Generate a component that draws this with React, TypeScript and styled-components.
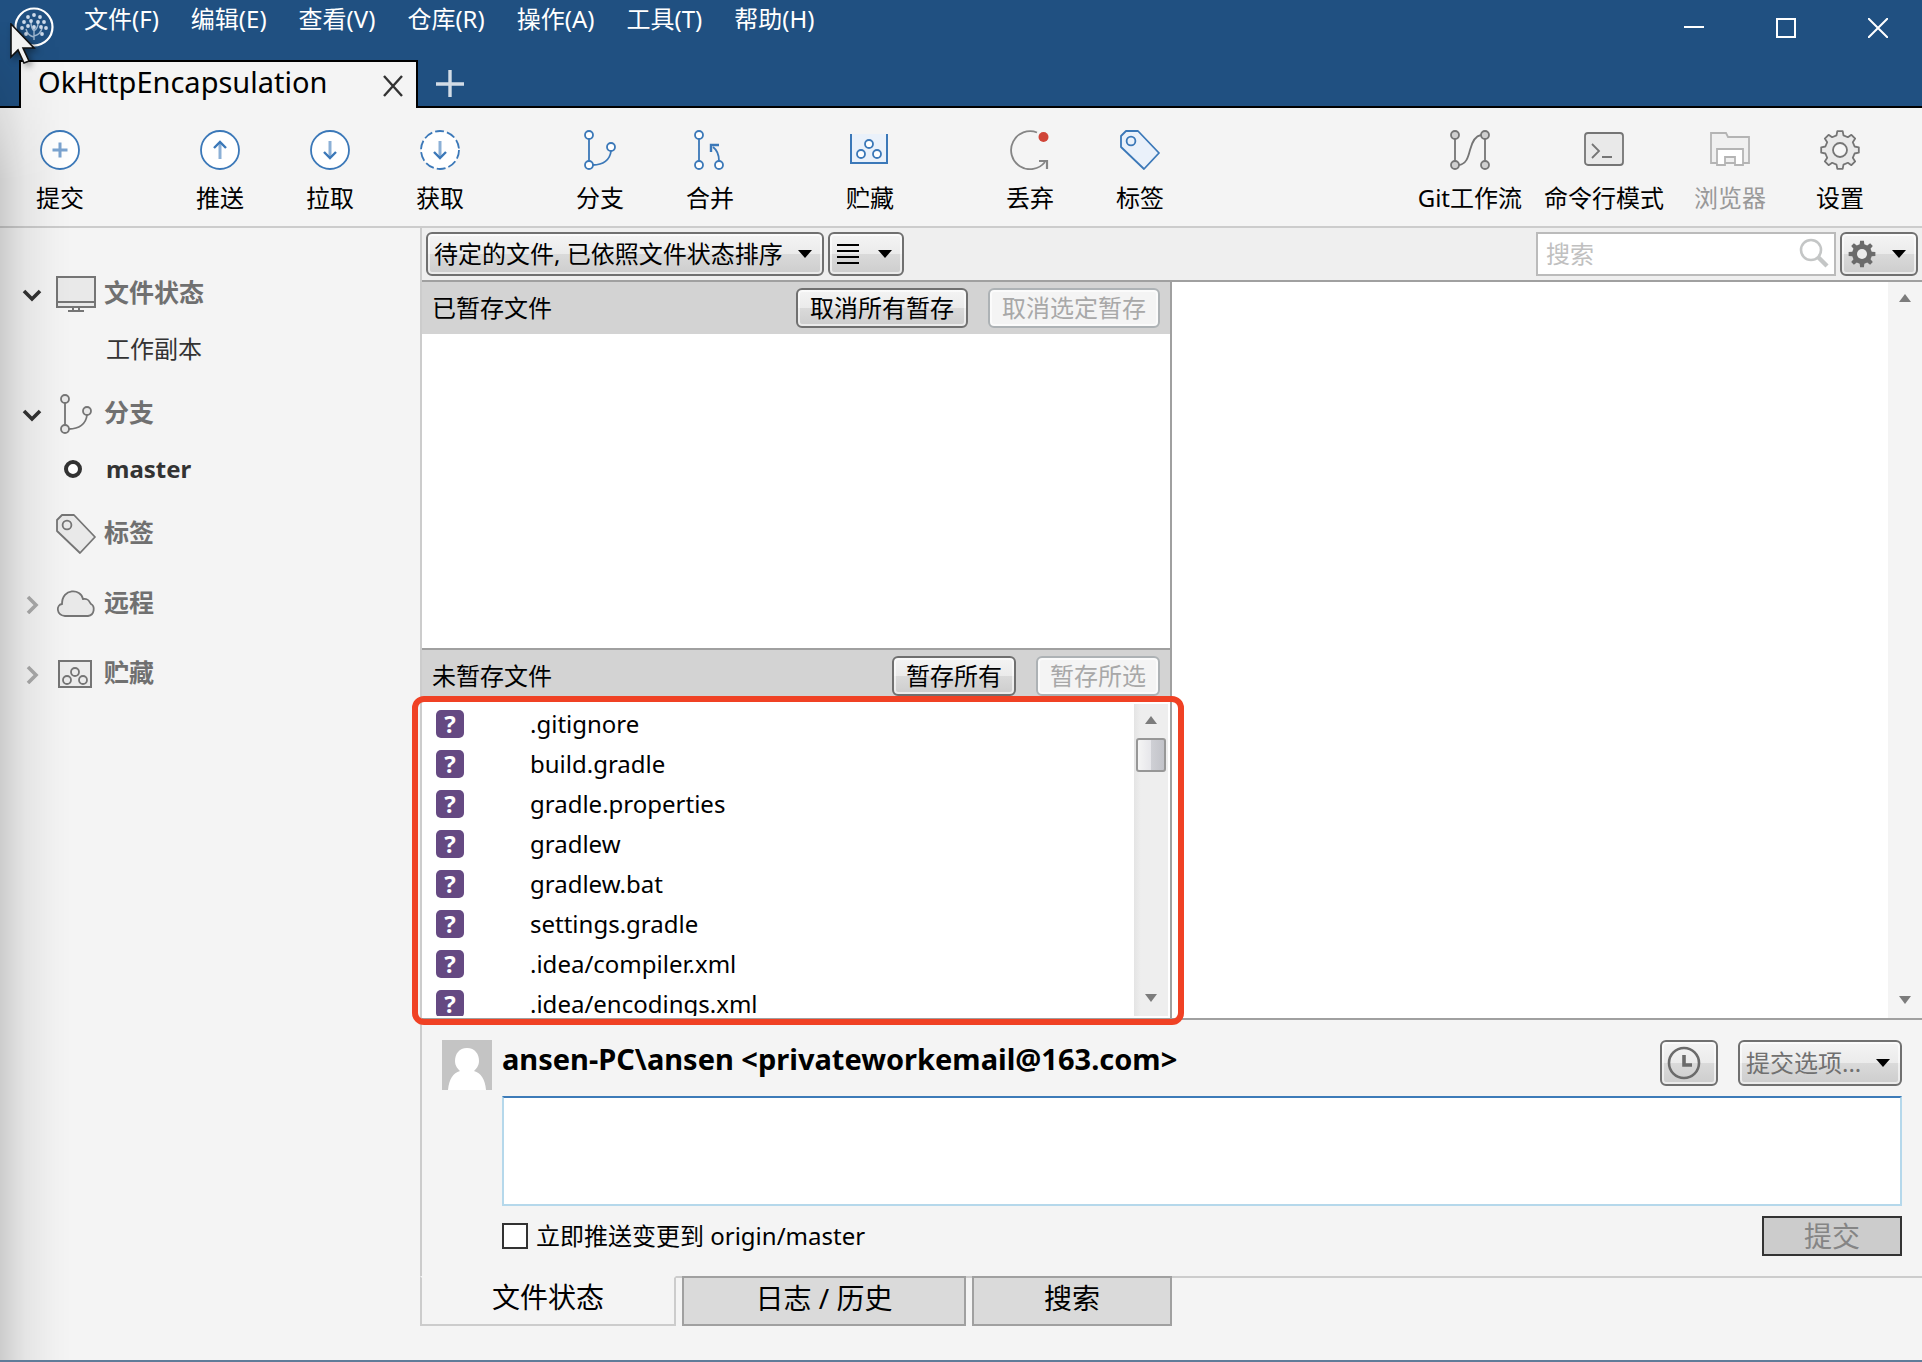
import React from "react";
import styled, { createGlobalStyle, css } from "styled-components";

const GlobalStyle = createGlobalStyle`
  *, *::before, *::after { box-sizing: border-box; }
  body {
    margin: 0;
    background: #f4f4f4;
    color: #000;
    font-family: "Noto Sans", "Noto Sans CJK SC", sans-serif;
    font-size: 24px;
    line-height: 32px;
  }
  button, input, select, textarea {
    font: inherit;
    color: inherit;
    margin: 0;
  }
  ul { list-style: none; margin: 0; padding: 0; }
  svg { display: block; flex: none; }
`;

/* ---------- shared drawing helpers ---------- */

const BLUE = "#3b78b8";
const GREY = "#757575";

function gearPath(c: number, outer: number, inner: number, teeth: number) {
  const pts: string[] = [];
  const step = (Math.PI * 2) / teeth;
  const at = (r: number, a: number) =>
    `${(c + r * Math.sin(a)).toFixed(2)} ${(c - r * Math.cos(a)).toFixed(2)}`;
  for (let i = 0; i < teeth; i++) {
    const a = i * step;
    pts.push(at(inner, a - step * 0.3), at(outer, a - step * 0.18));
    pts.push(at(outer, a + step * 0.18), at(inner, a + step * 0.3));
  }
  return `M${pts.join("L")}Z`;
}

const Icon = ({ children, size = 40, color = BLUE }: { children: React.ReactNode; size?: number; color?: string }) => (
  <svg width={size} height={size} viewBox="0 0 40 40" fill="none" stroke={color} strokeWidth={1.8} aria-hidden="true">
    {children}
  </svg>
);

const CommitIcon = () => (
  <Icon>
    <circle cx="20" cy="20" r="19" fill="#fff" />
    <path d="M20 12.5v15M12.5 20h15" stroke="#7ba4d0" strokeWidth="3" />
  </Icon>
);
const PushIcon = () => (
  <Icon>
    <circle cx="20" cy="20" r="19" fill="#fff" />
    <path d="M20 29V13" stroke="#8cb0d6" strokeWidth="3" />
    <path d="M14 18l6-6 6 6" strokeWidth="2.4" />
  </Icon>
);
const PullIcon = ({ dashed }: { dashed?: boolean }) => (
  <Icon>
    <circle cx="20" cy="20" r="19" fill="#fff" strokeDasharray={dashed ? "9 3" : undefined} />
    <path d="M20 11v16" stroke="#8cb0d6" strokeWidth="3" />
    <path d="M14 22l6 6 6-6" strokeWidth="2.4" />
  </Icon>
);
const BranchIcon = ({ color = BLUE, fill = "#fff" }: { color?: string; fill?: string }) => (
  <Icon color={color}>
    <path d="M9 9v22M13 35c10 0 17-5 18-14" />
    <g fill={fill}>
      <circle cx="9" cy="5" r="4" />
      <circle cx="9" cy="35" r="4" />
      <circle cx="31" cy="17" r="4" />
    </g>
  </Icon>
);
const MergeIcon = () => (
  <Icon>
    <path d="M9 9v22M29 31c0-6-2-11-6-14" />
    <path d="M21 22v-7h8" strokeWidth="2.4" />
    <g fill="#fff">
      <circle cx="9" cy="5" r="4" />
      <circle cx="9" cy="35" r="4" />
      <circle cx="29" cy="35" r="4" />
    </g>
  </Icon>
);
const StashIcon = () => (
  <Icon>
    <path d="M1 4v29h36V4z" fill="#eaf1fa" stroke="none" />
    <path d="M1 4v29h36V4" strokeWidth="2" />
    <g fill="#fff">
      <circle cx="19" cy="14" r="4" />
      <circle cx="11" cy="24" r="4" />
      <circle cx="27" cy="24" r="4" />
    </g>
  </Icon>
);
const DiscardIcon = () => (
  <Icon color="#858585">
    <path d="M27 2.5A19 19 0 1 0 35 32" />
    <path d="M29 31h8v8" strokeWidth="2.2" />
    <circle cx="33.500" cy="7" r="5" fill="#d04437" stroke="none" />
  </Icon>
);
const TagIcon = ({ color = BLUE, fill = "#eaf1fa" }: { color?: string; fill?: string }) => (
  <Icon color={color}>
    <path d="M6 1h12l21 22-15 16L1 17V6z" fill={fill} strokeLinejoin="round" />
    <circle cx="11" cy="11" r="4.400" />
  </Icon>
);
const FlowIcon = () => (
  <Icon color={GREY}>
    <path d="M5 9v22M35 9v22M9 35c7-1 9-7 11-15s5-14 11-15" />
    <g fill="#d0d0d0">
      <circle cx="5" cy="5" r="4" />
      <circle cx="5" cy="35" r="4" />
      <circle cx="35" cy="5" r="4" />
      <circle cx="35" cy="35" r="4" />
    </g>
  </Icon>
);
const TerminalIcon = () => (
  <Icon color={GREY}>
    <rect x="1" y="3" width="38" height="32" rx="3" fill="#e9e9e9" />
    <path d="M8 14l7 7-7 7M18 27h10" />
  </Icon>
);
const ExplorerIcon = () => (
  <Icon color="#b4b4b4">
    <path d="M1 33V3h15l2 4h21v26z" fill="#f0f0f0" />
    <path d="M7 35V19h26v16h-8v-8h-10v8z" fill="#fff" />
  </Icon>
);
const SettingsIcon = () => (
  <Icon color={GREY}>
    <path d={gearPath(20, 19, 15, 8)} fill="#e9e9e9" strokeLinejoin="round" />
    <circle cx="20" cy="20" r="7" fill="#f6f6f6" />
  </Icon>
);
const SolidGear = () => (
  <svg width="28" height="28" viewBox="0 0 28 28" aria-hidden="true">
    <path d={gearPath(14, 13.5, 10, 8)} fill="#6b6b6b" />
    <circle cx="14" cy="14" r="5" fill="#ececec" />
  </svg>
);
const MonitorIcon = () => (
  <Icon color={GREY}>
    <rect x="1" y="3" width="38" height="30" fill="#e9e9e9" strokeWidth="2" />
    <path d="M1 28h38M17 33v4M23 33v4M12 37h16" strokeWidth="2" />
  </Icon>
);
const CloudIcon = () => (
  <Icon color={GREY}>
    <path
      d="M9 32c-9-1-9-11-3-12C6 4 25 4 27 15c6-1 6 3 8 5 4 2 4 11-3 12z"
      fill="#e9e9e9"
    />
  </Icon>
);
const StashBoxIcon = () => (
  <Icon color={GREY}>
    <rect x="3" y="7" width="32" height="26" fill="#ececec" strokeWidth="2" />
    <circle cx="19" cy="18" r="4" />
    <circle cx="11" cy="26" r="4" />
    <circle cx="27" cy="26" r="4" />
  </Icon>
);

const ArrowMark = ({ up, small }: { up?: boolean; small?: boolean }) => (
  <svg width={small ? 12 : 14} height="8" viewBox="0 0 14 8" preserveAspectRatio="none" aria-hidden="true">
    <path d={up ? "M0 8h14L7 0z" : "M0 0h14L7 8z"} fill={small ? "#7c7c7c" : "#000"} />
  </svg>
);

/* ---------- window frame ---------- */

const Window = styled.div`
  position: relative;
  display: flex;
  flex-direction: column;
  height: 100vh;
  min-height: 900px;
  border-bottom: 2px solid #5f7c99;
`;

const EdgeShade = styled.div`
  position: absolute;
  inset: 0 auto 0 0;
  width: 72px;
  background: linear-gradient(to right, rgba(0, 0, 0, 0.16), rgba(0, 0, 0, 0.06) 36%, rgba(0, 0, 0, 0.01) 78%, transparent);
  mask-image: linear-gradient(to bottom, transparent 20px, #000 180px);
  pointer-events: none;
`;

const Pointer = styled.svg`
  position: absolute;
  left: 10px;
  top: 23px;
  filter: drop-shadow(3px 3px 3px rgba(0, 0, 0, 0.4));
  pointer-events: none;
`;

const TitleBar = styled.header`
  background: #205081;
`;

const TitleRow = styled.div`
  display: flex;
  align-items: flex-start;
  height: 60px;
  padding-left: 14px;
`;

const LogoBox = styled.div`
  padding-top: 7px;
  width: 70px;
`;

const MenuBar = styled.nav`
  display: flex;
  gap: 32px;
  flex: 1;
`;

const plainButton = css`
  border: 0;
  padding: 0;
  background: none;
  white-space: nowrap;
`;

const MenuButton = styled.button`
  ${plainButton}
  height: 38px;
  color: #fff;
`;

const CaptionButton = styled.button`
  ${plainButton}
  display: grid;
  place-items: center;
  width: 88px;
  height: 56px;
  margin-left: 4px;
`;

const TabRow = styled.div`
  display: flex;
  height: 48px;
`;

const TabLine = styled.div<{ $lead?: boolean }>`
  display: flex;
  align-items: center;
  width: ${(p) => (p.$lead ? "19px" : "auto")};
  flex: ${(p) => (p.$lead ? "none" : "1")};
  padding-left: ${(p) => (p.$lead ? "0" : "16px")};
  border-bottom: 2px solid #000;
`;

const RepoTab = styled.div`
  display: flex;
  align-items: flex-start;
  justify-content: space-between;
  width: 399px;
  padding: 4px 13px 0 17px;
  border: 2px solid #000;
  border-bottom: 0;
  background: #f4f4f4;
  font-size: 29px;
`;

const IconButton = styled.button`
  ${plainButton}
`;

const CloseTab = styled(IconButton)`
  padding-top: 8px;
`;

/* ---------- toolbar ---------- */

const Toolbar = styled.div`
  display: flex;
  justify-content: space-between;
  height: 120px;
  padding: 22px 27px 0 5px;
  border-bottom: 2px solid #ccc;
`;

const ToolGroups = styled.div`
  display: flex;
  gap: 50px;
`;

const ToolGroup = styled.div`
  display: flex;
`;

const ToolButton = styled.button`
  ${plainButton}
  display: flex;
  flex-direction: column;
  align-items: center;
  gap: 12px;
  min-width: 110px;
  height: 84px;
  padding: 0 11px;
  &:disabled { color: #999; }
`;

/* ---------- body ---------- */

const Body = styled.div`
  display: flex;
  flex: 1;
  min-height: 0;
`;

const Sidebar = styled.aside`
  width: 420px;
  flex: none;
  padding-top: 29px;
`;

const SectionRow = styled.div`
  display: flex;
  align-items: center;
  height: 70px;
  padding: 4px 0 0 22px;
`;

const SectionName = styled.h2`
  margin: 0 0 4px 8px;
  font-size: 25px;
  font-weight: 700;
  color: #707070;
`;

const ChevronBox = styled.span`
  width: 34px;
`;

const SectionChild = styled.div<{ $current?: boolean }>`
  display: flex;
  align-items: center;
  height: 50px;
  padding: 0 0 6px 64px;
  color: #333;
  font-weight: ${(p) => (p.$current ? 700 : 400)};
`;

const ChildMark = styled.span`
  width: 42px;
`;

const Main = styled.main`
  display: flex;
  flex-direction: column;
  flex: 1;
  min-width: 0;
`;

const Work = styled.div`
  display: flex;
  flex-direction: column;
  flex: 1;
  min-height: 0;
  border-left: 2px solid #ccc;
`;

const FilterBar = styled.div`
  display: flex;
  gap: 4px;
  height: 54px;
  padding: 4px;
  background: #efefef;
  border-bottom: 2px solid #a0a0a0;
`;

const Spacer = styled.div`
  flex: 1;
`;

const raised = css`
  border: 2px solid #707070;
  border-radius: 6px;
  background: linear-gradient(#f4f4f4, #ebebeb 50%, #dadada 50%, #cdcdcd);
  box-shadow: inset 0 0 0 2px rgba(255, 255, 255, 0.6);
`;

const SelectWrap = styled.label<{ $width: number }>`
  display: grid;
  grid-template: 100% / 100%;
  align-items: center;
  width: ${(p) => p.$width}px;
  & > * { grid-area: 1 / 1; }
  & > svg { justify-self: end; margin-right: 12px; pointer-events: none; }
`;

const Select = styled.select<{ $muted?: boolean }>`
  ${raised}
  appearance: none;
  width: 100%;
  height: 100%;
  padding: 0 0 0 6px;
  color: ${(p) => (p.$muted ? "#707070" : "#000")};
`;

const MenuDrop = styled.button<{ $width: number }>`
  ${raised}
  display: flex;
  align-items: center;
  justify-content: space-between;
  width: ${(p) => p.$width}px;
  padding: 0 10px 0 6px;
`;

const SearchBox = styled.label`
  display: flex;
  align-items: center;
  width: 300px;
  padding-right: 4px;
  border: 2px solid #bbb;
  background: #fff;
`;

const SearchInput = styled.input`
  flex: 1;
  min-width: 0;
  padding: 0 0 0 8px;
  border: 0;
  outline: 0;
  background: none;
  &::placeholder { color: #c0c0c0; }
`;

const Panes = styled.div`
  display: grid;
  grid-template: 100% / 1fr 1fr;
  flex: 1;
  min-height: 0;
  border-bottom: 2px solid #a0a0a0;
`;

const FilePane = styled.div`
  display: flex;
  flex-direction: column;
  min-width: 0;
  padding-bottom: 2px;
  border-right: 2px solid #a0a0a0;
  background: #fff;
`;

const StageSection = styled.section<{ $divided?: boolean }>`
  display: flex;
  flex-direction: column;
  flex: 1;
  min-height: 0;
  border-top: ${(p) => (p.$divided ? "2px solid #a0a0a0" : "0")};
`;

const StageHeader = styled.div`
  display: flex;
  gap: 20px;
  height: 52px;
  padding: 6px 10px;
  background: #d3d3d3;
`;

const StageTitle = styled.h3`
  flex: 1;
  margin: 0;
  font-size: 24px;
  font-weight: 400;
  line-height: 40px;
`;

const StageButton = styled.button`
  ${raised}
  height: 40px;
  padding: 0 12px;
  white-space: nowrap;
  &:disabled {
    border-color: #adb2b5;
    background: #f4f4f4;
    color: #a8a8a8;
  }
`;

const ListArea = styled.div`
  position: relative;
  display: flex;
  flex: 1;
  min-height: 0;
  padding: 2px 2px 0 0;
`;

const Highlight = styled.div`
  position: absolute;
  z-index: 1;
  inset: -6px -14px -9px -10px;
  border: 6px solid #f04124;
  border-radius: 12px;
  pointer-events: none;
`;

const FileList = styled.ul`
  flex: 1;
  overflow: hidden;
`;

const FileRow = styled.li`
  display: flex;
  align-items: center;
  height: 40px;
  padding-left: 14px;
`;

const Badge = styled.span`
  width: 28px;
  height: 28px;
  margin-right: 66px;
  border-radius: 5px;
  background: #654982;
  color: #fff;
  font-weight: 700;
  line-height: 28px;
  text-align: center;
`;

const ScrollTrack = styled.div<{ $tinted?: boolean }>`
  display: flex;
  flex-direction: column;
  align-items: center;
  width: 34px;
  padding: 12px 0 14px;
  background: ${(p) => (p.$tinted ? "linear-gradient(to right, #e4e4e4, #eee 20%)" : "#f4f4f4")};
`;

const Thumb = styled.div`
  width: 30px;
  height: 34px;
  margin-top: 14px;
  border: 2px solid #979797;
  border-radius: 3px;
  background: linear-gradient(to right, #f5f5f5, #e6e6ea 50%, #cfd0d5 50%, #c2c3c9);
`;

const DiffPane = styled.div`
  display: flex;
  justify-content: flex-end;
  background: #fff;
`;

/* ---------- commit form ---------- */

const CommitForm = styled.form`
  display: flex;
  gap: 10px;
  padding: 20px;
`;

const CommitFields = styled.div`
  display: flex;
  flex-direction: column;
  flex: 1;
  gap: 10px;
`;

const AuthorRow = styled.div`
  display: flex;
  gap: 20px;
  height: 46px;
`;

const Author = styled.strong`
  flex: 1;
  font-size: 29px;
  line-height: 38px;
  white-space: nowrap;
`;

const ClockButton = styled.button`
  ${raised}
  width: 58px;
  padding: 0 0 0 5px;
`;

const Message = styled.textarea`
  height: 110px;
  border: 2px solid #b5d8eb;
  border-top-color: #3d7bb8;
  background: #fff;
  outline: 0;
  resize: none;
`;

const SubmitRow = styled.div`
  display: flex;
  align-items: center;
  justify-content: space-between;
`;

const PushLabel = styled.label`
  display: flex;
  align-items: center;
  gap: 8px;
`;

const Tick = styled.input`
  appearance: none;
  width: 26px;
  height: 26px;
  border: 2px solid #333;
  background: #fff;
`;

const SubmitButton = styled.button`
  width: 140px;
  height: 40px;
  padding: 0;
  border: 2px solid #333;
  background: #ccc;
  font-size: 28px;
  line-height: 32px;
  &:disabled { color: #858585; }
`;

/* ---------- view tabs ---------- */

const ViewTabs = styled.div`
  display: flex;
  height: 84px;
  padding-bottom: 34px;
`;

const ViewTab = styled.button<{ $width: number; $active?: boolean }>`
  width: ${(p) => p.$width}px;
  padding: 0 0 ${(p) => (p.$active ? 8 : 6)}px;
  border: 2px solid ${(p) => (p.$active ? "#ccc" : "#a0a0a0")};
  background: ${(p) => (p.$active ? "#f4f4f4" : "#dadada")};
  font-size: 28px;
  white-space: nowrap;
  ${(p) => p.$active && "border-top-color: #f4f4f4;"}
`;

const TabGap = styled.div<{ $fill?: boolean }>`
  width: 6px;
  flex: ${(p) => (p.$fill ? "1" : "none")};
  border-top: 2px solid #ccc;
`;

/* ---------- page ---------- */

const MENUS = ["文件(F)", "编辑(E)", "查看(V)", "仓库(R)", "操作(A)", "工具(T)", "帮助(H)"];

const TOOLS: [string, React.ReactNode][][] = [
  [["提交", <CommitIcon />]],
  [["推送", <PushIcon />], ["拉取", <PullIcon />], ["获取", <PullIcon dashed />]],
  [["分支", <BranchIcon />], ["合并", <MergeIcon />]],
  [["贮藏", <StashIcon />]],
  [["丢弃", <DiscardIcon />], ["标签", <TagIcon />]],
];

const SIDE_TOOLS: [string, React.ReactNode, boolean][] = [
  ["Git工作流", <FlowIcon />, false],
  ["命令行模式", <TerminalIcon />, false],
  ["浏览器", <ExplorerIcon />, true],
  ["设置", <SettingsIcon />, false],
];

const FILES = [
  ".gitignore",
  "build.gradle",
  "gradle.properties",
  "gradlew",
  "gradlew.bat",
  "settings.gradle",
  ".idea/compiler.xml",
  ".idea/encodings.xml",
];

const LOGO_DOTS = [
  [20, 8], [14, 10], [26, 10], [10, 15], [30, 15], [17, 14], [24, 15], [8, 21],
  [32, 21], [14, 19], [27, 20], [12, 27], [28, 27], [20, 20],
];

const Logo = () => (
  <svg width="40" height="40" viewBox="0 0 40 40" fill="none" stroke="#fff" aria-hidden="true">
    <circle cx="20" cy="20" r="18.500" strokeWidth="2.200" />
    <path
      d="M20 33V20M20 29c4-1 7-3 8-8M20 30c-5-1-7-4-8-8M20 24c3-2 4-4 4-8M20 24c-2-2-3-5-3-9"
      stroke="#9db5ce"
      strokeWidth="1.400"
    />
    <g fill="#cddaea" stroke="none">
      {LOGO_DOTS.map(([x, y]) => <circle key={`${x}-${y}`} cx={x} cy={y} r="1.900" />)}
    </g>
  </svg>
);

const Chevron = ({ open, hidden }: { open?: boolean; hidden?: boolean }) => (
  <ChevronBox>
    {!hidden && (
      <svg width="20" height="20" viewBox="0 0 20 20" fill="none" strokeWidth="3.600" stroke={open ? "#333" : "#aaa"} aria-hidden="true">
        <path d={open ? "M2 7l8 8 8-8" : "M6 3l8 8-8 8"} />
      </svg>
    )}
  </ChevronBox>
);

const Section = ({ name, icon, open, leaf, children }: {
  name: string; icon: React.ReactNode; open?: boolean; leaf?: boolean; children?: React.ReactNode;
}) => (
  <section>
    <SectionRow>
      <Chevron open={open} hidden={leaf} />
      {icon}
      <SectionName>{name}</SectionName>
    </SectionRow>
    {children}
  </section>
);

export default function App() {
  return (
    <Window>
      <GlobalStyle />
      <TitleBar>
        <TitleRow>
          <LogoBox><Logo /></LogoBox>
          <MenuBar>
            {MENUS.map((m) => <MenuButton key={m}>{m}</MenuButton>)}
          </MenuBar>
          <CaptionButton aria-label="最小化">
            <svg width="20" height="20"><path d="M0 9h20" stroke="#fff" strokeWidth="2" /></svg>
          </CaptionButton>
          <CaptionButton aria-label="最大化">
            <svg width="20" height="20"><rect x="1" y="1" width="18" height="18" fill="none" stroke="#fff" strokeWidth="2" /></svg>
          </CaptionButton>
          <CaptionButton aria-label="关闭">
            <svg width="20" height="20"><path d="M0 0l20 20M20 0L0 20" stroke="#fff" strokeWidth="2" /></svg>
          </CaptionButton>
        </TitleRow>
        <TabRow>
          <TabLine $lead />
          <RepoTab>
            OkHttpEncapsulation
            <CloseTab aria-label="关闭标签页">
              <svg width="20" height="24" viewBox="0 0 20 24"><path d="M1 2l18 20M19 2L1 22" stroke="#333" strokeWidth="2.400" /></svg>
            </CloseTab>
          </RepoTab>
          <TabLine>
            <IconButton aria-label="新建标签页">
              <svg width="32" height="28"><path d="M16 1v28M2 15h28" stroke="#d2dce6" strokeWidth="3.400" /></svg>
            </IconButton>
          </TabLine>
        </TabRow>
      </TitleBar>

      <Toolbar>
        <ToolGroups>
          {TOOLS.map((group, i) => (
            <ToolGroup key={i}>
              {group.map(([name, icon]) => <ToolButton key={name}>{icon}{name}</ToolButton>)}
            </ToolGroup>
          ))}
        </ToolGroups>
        <ToolGroup>
          {SIDE_TOOLS.map(([name, icon, off]) => (
            <ToolButton key={name} disabled={off}>{icon}{name}</ToolButton>
          ))}
        </ToolGroup>
      </Toolbar>

      <Body>
        <Sidebar>
          <Section name="文件状态" icon={<MonitorIcon />} open>
            <SectionChild><ChildMark />工作副本</SectionChild>
          </Section>
          <Section name="分支" icon={<BranchIcon color={GREY} fill="#e9e9e9" />} open>
            <SectionChild $current>
              <ChildMark>
                <svg width="18" height="18"><circle cx="9" cy="9" r="7" fill="#fff" stroke="#333" strokeWidth="4" /></svg>
              </ChildMark>
              master
            </SectionChild>
          </Section>
          <Section name="标签" icon={<TagIcon color={GREY} fill="#e9e9e9" />} leaf />
          <Section name="远程" icon={<CloudIcon />} />
          <Section name="贮藏" icon={<StashBoxIcon />} />
        </Sidebar>

        <Main>
          <Work>
            <FilterBar>
              <SelectWrap $width={398}>
                <Select aria-label="文件排序">
                  <option>待定的文件, 已依照文件状态排序</option>
                </Select>
                <ArrowMark />
              </SelectWrap>
              <MenuDrop $width={76} aria-label="列表视图">
                <svg width="24" height="22"><path d="M1 2h22M1 8h22M1 14h22M1 20h22" stroke="#000" strokeWidth="2" /></svg>
                <ArrowMark />
              </MenuDrop>
              <Spacer />
              <SearchBox>
                <SearchInput placeholder="搜索" aria-label="搜索" />
                <svg width="32" height="32" viewBox="0 0 32 32" fill="none" stroke="#c4c6c6" aria-hidden="true">
                  <circle cx="13" cy="12" r="10" strokeWidth="2.600" />
                  <path d="M20 19l9 9" strokeWidth="4.400" />
                </svg>
              </SearchBox>
              <MenuDrop $width={78} aria-label="选项">
                <SolidGear />
                <ArrowMark />
              </MenuDrop>
            </FilterBar>

            <Panes>
              <FilePane>
                <StageSection>
                  <StageHeader>
                    <StageTitle>已暂存文件</StageTitle>
                    <StageButton>取消所有暂存</StageButton>
                    <StageButton disabled>取消选定暂存</StageButton>
                  </StageHeader>
                  <ListArea />
                </StageSection>
                <StageSection $divided>
                  <StageHeader>
                    <StageTitle>未暂存文件</StageTitle>
                    <StageButton>暂存所有</StageButton>
                    <StageButton disabled>暂存所选</StageButton>
                  </StageHeader>
                  <ListArea>
                    <FileList>
                      {FILES.map((f) => <FileRow key={f}><Badge>?</Badge>{f}</FileRow>)}
                    </FileList>
                    <ScrollTrack $tinted>
                      <ArrowMark up small />
                      <Thumb />
                      <Spacer />
                      <ArrowMark small />
                    </ScrollTrack>
                    <Highlight />
                  </ListArea>
                </StageSection>
              </FilePane>
              <DiffPane>
                <ScrollTrack>
                  <ArrowMark up small />
                  <Spacer />
                  <ArrowMark small />
                </ScrollTrack>
              </DiffPane>
            </Panes>

            <CommitForm onSubmit={(e) => e.preventDefault()}>
              <svg width="50" height="50" viewBox="0 0 50 50" aria-hidden="true">
                <rect width="50" height="50" fill="#c4c4c4" />
                <path d="M25 8c8 0 12 6 12 13 0 5-3 8-5 10 7 2 11 8 12 19H6c1-11 5-17 12-19-2-2-5-5-5-10 0-7 4-13 12-13z" fill="#fff" />
              </svg>
              <CommitFields>
                <AuthorRow>
                  <Author>{"ansen-PC\\ansen <privateworkemail@163.com>"}</Author>
                  <ClockButton type="button" aria-label="最近的提交信息">
                    <svg width="34" height="34" viewBox="0 0 34 34" fill="none" stroke="#6b6b6b">
                      <circle cx="17" cy="17" r="15" strokeWidth="2.600" />
                      <path d="M17 9v10h8" strokeWidth="3.600" />
                    </svg>
                  </ClockButton>
                  <SelectWrap $width={164}>
                    <Select aria-label="提交选项" $muted>
                      <option>提交选项...</option>
                    </Select>
                    <ArrowMark />
                  </SelectWrap>
                </AuthorRow>
                <Message aria-label="提交信息" />
                <SubmitRow>
                  <PushLabel>
                    <Tick type="checkbox" />
                    立即推送变更到 origin/master
                  </PushLabel>
                  <SubmitButton disabled>提交</SubmitButton>
                </SubmitRow>
              </CommitFields>
            </CommitForm>
          </Work>

          <ViewTabs>
            <ViewTab $width={256} $active>文件状态</ViewTab>
            <TabGap />
            <ViewTab $width={284}>日志 / 历史</ViewTab>
            <TabGap />
            <ViewTab $width={200}>搜索</ViewTab>
            <TabGap $fill />
          </ViewTabs>
        </Main>
      </Body>

      <EdgeShade />
      <Pointer width="26" height="42" viewBox="0 0 26 42" aria-hidden="true">
        <path d="M1 1v33l7-7 6 13 5-2-6-13h11z" fill="#f2f2f2" stroke="#111" strokeWidth="1.600" />
      </Pointer>
    </Window>
  );
}
